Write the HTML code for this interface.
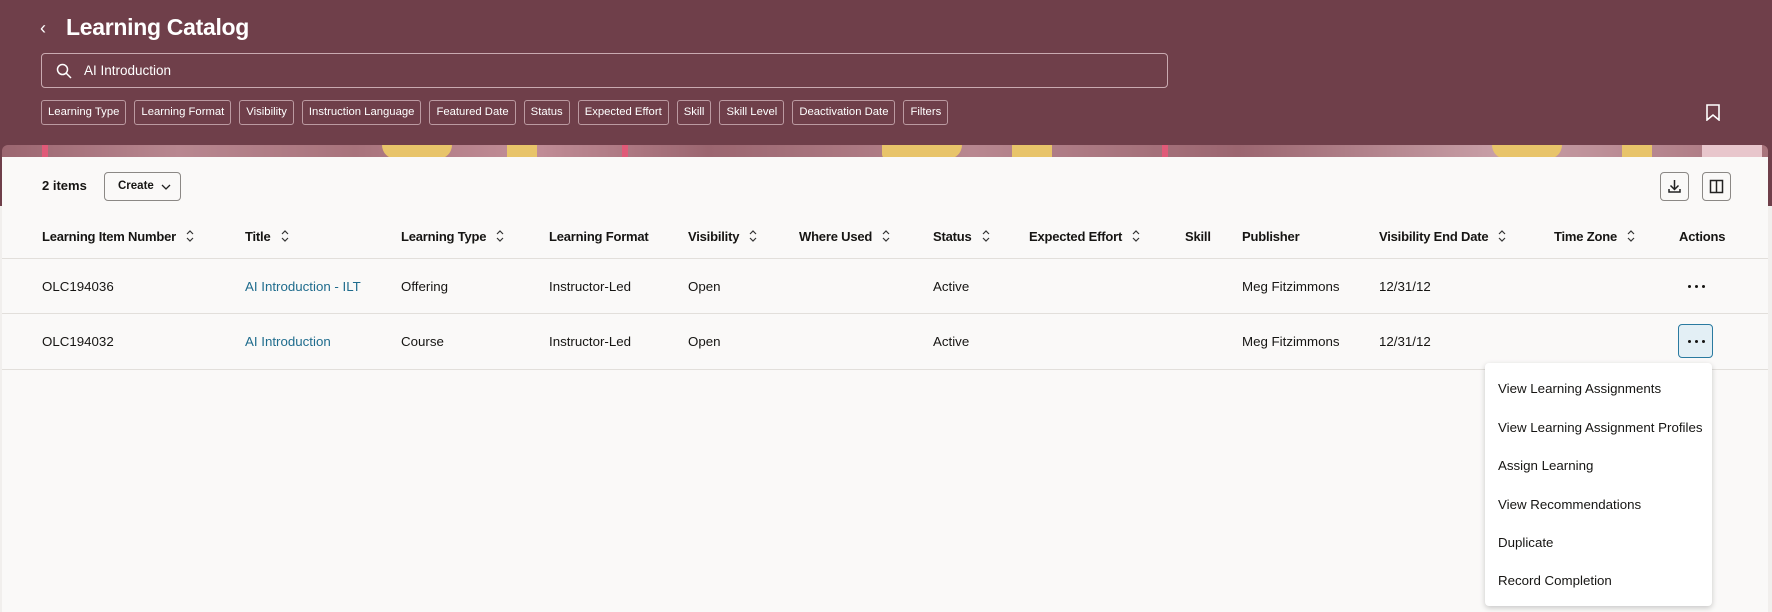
<!DOCTYPE html>
<html><head><meta charset="utf-8"><style>
*{box-sizing:border-box;margin:0;padding:0}
body{width:1772px;height:612px;overflow:hidden;background:#f1efed;font-family:"Liberation Sans",sans-serif;color:#161513;position:relative}
.hdr{position:absolute;left:0;top:0;width:1772px;height:206px;background:#6f3f4a}
.banner{position:absolute;left:2px;top:145px;width:1766px;height:14px;border-radius:6px 6px 0 0;overflow:hidden;background:linear-gradient(90deg,#9b6670 0%,#b88790 10%,#a8737c 20%,#c28e98 30%,#9b6670 40%,#b88790 55%,#9b6670 70%,#c9a0a8 85%,#a8737c 100%)}
.banner i{position:absolute;top:0;height:14px}
.title{position:absolute;left:66px;top:14px;font-size:23px;font-weight:bold;color:#fff;letter-spacing:-0.3px}
.back{position:absolute;left:40px;top:18px;color:#fff;font-size:18px}
.search{position:absolute;left:41px;top:53px;width:1127px;height:35px;border:1px solid #c9aab1;border-radius:4px}
.search span{position:absolute;left:42px;top:9px;color:#fff;font-size:13.5px}
.chips{position:absolute;left:41px;top:100px;display:flex;gap:8px}
.chip{height:25px;border:1px solid #bb9aa1;border-radius:3px;color:#fff;font-size:11.3px;padding:0 6px;line-height:23px;white-space:nowrap}
.card{position:absolute;left:2px;top:157px;width:1766px;height:455px;background:#faf9f8}
.t{position:absolute;font-size:13.3px;white-space:nowrap}
.h{font-weight:bold;top:229px;font-size:13px;letter-spacing:-0.2px}
.line{position:absolute;left:2px;width:1766px;height:1px;background:#e2dfdb}
.btn{position:absolute;border:1px solid #8b8885;border-radius:4px;background:#faf9f8}
a{color:#1f6c8d;text-decoration:none}
.menu{position:absolute;left:1485px;top:363px;width:227px;height:243px;background:#fff;border-radius:4px;box-shadow:0 2px 6px rgba(0,0,0,.2)}
.menu div{position:absolute;left:13px;font-size:13.3px;white-space:nowrap}
.s{display:inline-block;width:10px;height:14px;margin-left:9px;vertical-align:-2px}
.dots{position:absolute;display:flex;gap:4px}
.dots b{width:3px;height:3px;border-radius:50%;background:#161513}
</style></head><body>
<div class="hdr"></div>
<div class="banner">
<i style="left:40px;width:6px;background:#e05a78"></i>
<i style="left:380px;width:70px;background:#e8c46a;border-radius:0 0 20px 20px"></i>
<i style="left:505px;width:30px;background:#e8c46a"></i>
<i style="left:620px;width:6px;background:#e05a78"></i>
<i style="left:880px;width:80px;background:#e8c46a;border-radius:0 0 30px 10px"></i>
<i style="left:1010px;width:40px;background:#e8c46a"></i>
<i style="left:1160px;width:6px;background:#e05a78"></i>
<i style="left:1490px;width:70px;background:#e8c46a;border-radius:0 0 20px 20px"></i>
<i style="left:1620px;width:30px;background:#e8c46a"></i>
<i style="left:1700px;width:60px;background:#e8c6cc"></i>
</div>
<div class="back">&#8249;</div>
<div class="title">Learning Catalog</div>
<div class="search"><svg style="position:absolute;left:14px;top:9px" width="16" height="16" viewBox="0 0 16 16"><circle cx="6.5" cy="6.5" r="5" stroke="#fff" stroke-width="1.5" fill="none"/><path d="M10 10l5 5" stroke="#fff" stroke-width="1.5"/></svg><span>AI Introduction</span></div>
<div class="chips"><div class="chip">Learning Type</div><div class="chip">Learning Format</div><div class="chip">Visibility</div><div class="chip">Instruction Language</div><div class="chip">Featured Date</div><div class="chip">Status</div><div class="chip">Expected Effort</div><div class="chip">Skill</div><div class="chip">Skill Level</div><div class="chip">Deactivation Date</div><div class="chip">Filters</div></div>
<svg style="position:absolute;left:1706px;top:104px" width="14" height="17" viewBox="0 0 14 17"><path d="M1 1h12v15l-6-5-6 5z" stroke="#fff" stroke-width="1.6" fill="none"/></svg>
<div class="card"></div>
<div class="t" style="left:42px;top:178px;font-weight:bold;font-size:13px">2 items</div>
<div class="btn" style="left:104px;top:172px;width:77px;height:29px"><span style="position:absolute;left:13px;top:7px;font-size:11.5px;font-weight:bold">Create</span><svg style="position:absolute;left:56px;top:11px" width="10" height="7" viewBox="0 0 10 7"><path d="M1 1l4 4 4-4" stroke="#222" stroke-width="1.3" fill="none"/></svg></div>
<div class="btn" style="left:1660px;top:172px;width:29px;height:29px"><svg width="27" height="27" viewBox="0 0 27 27"><path d="M13.5 7v9M9.5 12.5l4 4 4-4M8 16v3h11v-3" stroke="#222" stroke-width="1.5" fill="none"/></svg></div>
<div class="btn" style="left:1702px;top:172px;width:29px;height:29px"><svg width="27" height="27" viewBox="0 0 27 27"><rect x="7.5" y="7.5" width="12" height="12" stroke="#222" stroke-width="1.5" fill="none"/><path d="M13.5 7.5v12" stroke="#222" stroke-width="1.5"/></svg></div>
<svg width="0" height="0" style="position:absolute"><defs><symbol id="srt" viewBox="0 0 10 14"><path d="M2 5l3-3 3 3M2 9l3 3 3-3" stroke="#333" stroke-width="1.2" fill="none"/></symbol></defs></svg>
<div class="t h" style="left:42px">Learning Item Number<svg class="s"><use href="#srt"/></svg></div>
<div class="t h" style="left:245px">Title<svg class="s"><use href="#srt"/></svg></div>
<div class="t h" style="left:401px">Learning Type<svg class="s"><use href="#srt"/></svg></div>
<div class="t h" style="left:549px">Learning Format</div>
<div class="t h" style="left:688px">Visibility<svg class="s"><use href="#srt"/></svg></div>
<div class="t h" style="left:799px">Where Used<svg class="s"><use href="#srt"/></svg></div>
<div class="t h" style="left:933px">Status<svg class="s"><use href="#srt"/></svg></div>
<div class="t h" style="left:1029px">Expected Effort<svg class="s"><use href="#srt"/></svg></div>
<div class="t h" style="left:1185px">Skill</div>
<div class="t h" style="left:1242px">Publisher</div>
<div class="t h" style="left:1379px">Visibility End Date<svg class="s"><use href="#srt"/></svg></div>
<div class="t h" style="left:1554px">Time Zone<svg class="s"><use href="#srt"/></svg></div>
<div class="t h" style="left:1679px">Actions</div>
<div class="line" style="top:258px"></div>
<div class="line" style="top:313px"></div>
<div class="line" style="top:369px"></div>
<div class="t" style="left:42px;top:279px">OLC194036</div>
<div class="t" style="left:245px;top:279px"><a>AI Introduction - ILT</a></div>
<div class="t" style="left:401px;top:279px">Offering</div>
<div class="t" style="left:549px;top:279px">Instructor-Led</div>
<div class="t" style="left:688px;top:279px">Open</div>
<div class="t" style="left:933px;top:279px">Active</div>
<div class="t" style="left:1242px;top:279px">Meg Fitzimmons</div>
<div class="t" style="left:1379px;top:279px">12/31/12</div>
<div class="dots" style="left:1688px;top:285px"><b></b><b></b><b></b></div>
<div class="t" style="left:42px;top:334px">OLC194032</div>
<div class="t" style="left:245px;top:334px"><a>AI Introduction</a></div>
<div class="t" style="left:401px;top:334px">Course</div>
<div class="t" style="left:549px;top:334px">Instructor-Led</div>
<div class="t" style="left:688px;top:334px">Open</div>
<div class="t" style="left:933px;top:334px">Active</div>
<div class="t" style="left:1242px;top:334px">Meg Fitzimmons</div>
<div class="t" style="left:1379px;top:334px">12/31/12</div>
<div style="position:absolute;left:1678px;top:324px;width:35px;height:34px;border:1px solid #2a7aa0;border-radius:4px;background:#e3eff5"></div>
<div class="dots" style="left:1688px;top:340px"><b></b><b></b><b></b></div>
<div class="menu">
<div style="top:18px">View Learning Assignments</div>
<div style="top:57px">View Learning Assignment Profiles</div>
<div style="top:95px">Assign Learning</div>
<div style="top:134px">View Recommendations</div>
<div style="top:172px">Duplicate</div>
<div style="top:210px">Record Completion</div>
</div>
</body></html>
